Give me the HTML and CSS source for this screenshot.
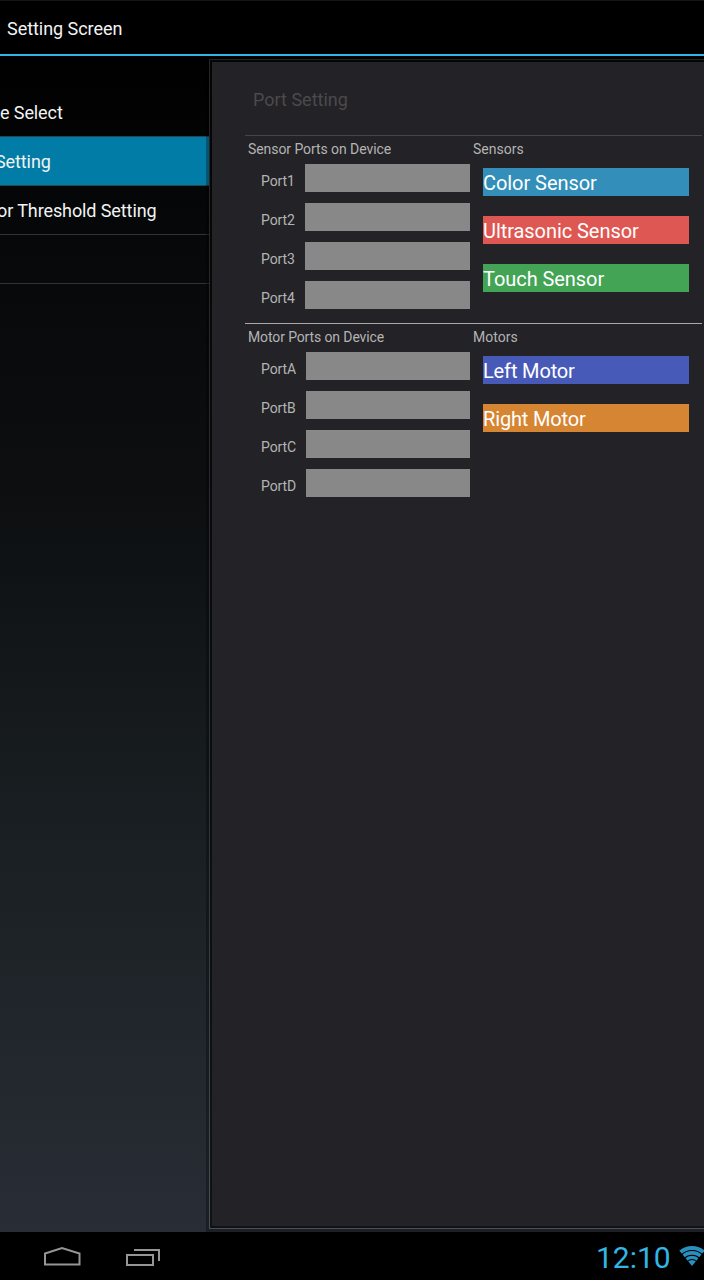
FILE: index.html
```
<!DOCTYPE html>
<html lang="en">
<head>
<meta charset="utf-8">
<title>Setting Screen</title>
<link rel="stylesheet" href="styles.css">
</head>
<body>
<div class="screen">
  <header class="action-bar"><h1>Setting Screen</h1></header>
  <div class="body">
    <nav class="sidebar">
      <div class="item"><span>e Select</span></div>
      <div class="item selected"><span class="cut-s">Setting</span></div>
      <div class="item"><span class="cut-o">or Threshold Setting</span></div>
      <div class="item"></div>
    </nav>
    <main class="frame">
      <div class="inner">
        <div class="panel">
          <h2>Port Setting</h2>
          <section class="group first">
            <div class="ports">
              <h3>Sensor Ports on Device</h3>
              <div class="port"><label>Port1</label><div class="slot"></div></div>
              <div class="port"><label>Port2</label><div class="slot"></div></div>
              <div class="port"><label>Port3</label><div class="slot"></div></div>
              <div class="port"><label>Port4</label><div class="slot"></div></div>
            </div>
            <div class="parts">
              <h3>Sensors</h3>
              <div class="chip blue"><span>Color Sensor</span></div>
              <div class="chip red"><span>Ultrasonic Sensor</span></div>
              <div class="chip green"><span>Touch Sensor</span></div>
            </div>
          </section>
          <section class="group second">
            <div class="ports">
              <h3>Motor Ports on Device</h3>
              <div class="port"><label>PortA</label><div class="slot"></div></div>
              <div class="port"><label>PortB</label><div class="slot"></div></div>
              <div class="port"><label>PortC</label><div class="slot"></div></div>
              <div class="port"><label>PortD</label><div class="slot"></div></div>
            </div>
            <div class="parts">
              <h3>Motors</h3>
              <div class="chip indigo"><span>Left Motor</span></div>
              <div class="chip orange"><span>Right Motor</span></div>
            </div>
          </section>
        </div>
      </div>
    </main>
  </div>
  <footer class="system-bar">
    <svg class="home" width="38" height="20" viewBox="0 0 38 20" fill="none" stroke="#969696" stroke-width="2"><path d="M2 18.500V7.500L19 2L36.500 7.500V18.500Z"/></svg>
    <svg class="recent" width="36" height="19" viewBox="0 0 36 19" fill="none" stroke="#969696" stroke-width="2"><path d="M1 7H27V17H1ZM8 2H33V13"/></svg>
    <span class="clock">12:10</span>
    <svg class="wifi" width="26" height="20" viewBox="0 0 26 20">
      <clipPath id="fan"><path d="M13 20L-1 3V-2H27V3Z"/></clipPath>
      <g clip-path="url(#fan)" fill="none" stroke="#2a8fbd">
        <circle cx="13" cy="20" r="18" stroke-width="3.800"/>
        <circle cx="13" cy="20" r="13.100" stroke-width="3.600"/>
        <circle cx="13" cy="20" r="8.600" stroke-width="3.200"/>
        <circle cx="13" cy="20" r="3" stroke-width="6"/>
      </g>
    </svg>
  </footer>
</div>
</body>
</html>
```
FILE: styles.css
```
* { box-sizing: border-box; }
body { margin: 0; background: #000; font-family: Roboto, sans-serif; color: #f3f3f3; }
h1, h2, h3 { margin: 0; font-weight: 400; }
.screen { width: 704px; height: 1280px; overflow: hidden; display: flex; flex-direction: column; }
.action-bar { height: 56px; flex: none; padding-left: 7px; border-top: 1px solid #151515; border-bottom: 2px solid #33b5e5; }
.action-bar h1 { font-size: 18px; line-height: 55px; letter-spacing: -0.05px; }
.body { height: 1176px; flex: none; display: flex; background: linear-gradient(#000 0%, #07080a 16%, #0c0e10 36%, #171c1f 60%, #20262b 82%, #292d36 100%); }
.sidebar { width: 206px; flex: none; padding-top: 32px; }
.item { width: 209px; height: 49px; border-bottom: 1px solid #303234; font-size: 18px; line-height: 49px; letter-spacing: -0.1px; white-space: nowrap; overflow: hidden; }
.item:first-child { border-bottom-color: #244650; }
.item.selected { background: #007ca6; border-bottom-color: #244650; }
.item span { display: block; }
.item .cut-s { margin-left: -5px; }
.item .cut-o { margin-left: -3px; }
.frame { flex: 1; padding: 3px 0 3px 3px; background: rgba(0, 0, 0, .3); z-index: 1; }
.inner { height: 1170px; padding: 2px 0 2px 2px; border: 1px solid #3a4042; border-image: linear-gradient(#242424, #2c2f30 60%, #4a5052) 1; border-width: 1px 0 1px 1px; background: linear-gradient(#050505, #101214); }
.panel { width: 492px; height: 1164px; padding: 24px 2px 0 33px; background: #232226; }
h2 { height: 49px; padding-left: 8px; font-size: 18px; line-height: 28px; color: #4b4a4c; }
.group { width: 457px; display: flex; border-top: 1px solid #454448; }
.first { height: 188px; }
.second { border-top-color: #a9a9aa; }
.ports { width: 225px; }
h3 { height: 28px; font-size: 14px; line-height: 27px; letter-spacing: -.07px; color: #b4b4b4; white-space: nowrap; }
.ports h3 { padding-left: 3px; }
.second .ports h3 { letter-spacing: -.12px; }
.port { display: flex; height: 28px; margin-bottom: 11px; }
.port label { width: 60px; flex: none; padding-left: 16px; font-size: 14px; line-height: 35px; letter-spacing: -.1px; color: #b4b4b4; }
.second .port label { width: 61px; }
.slot { flex: 1; background: #888; }
.parts { padding-left: 3px; }
.parts .chip { margin-left: 10px; margin-bottom: 20px; }
.parts h3 { height: 32px; letter-spacing: 0; }
.chip { width: 206px; height: 28px; font-size: 20px; line-height: 30px; letter-spacing: -.06px; color: #fff; white-space: nowrap; }
.indigo, .orange { letter-spacing: -.15px; }
.blue { background: #338fb9; }
.red { background: #df5752; }
.green { background: #43a456; }
.indigo { background: #475ab8; }
.orange { background: #d68533; }
.system-bar { height: 48px; flex: none; background: #000; display: flex; align-items: flex-start; }
.home { margin: 14px 0 0 43px; flex: none; }
.recent { margin: 16px 0 0 45px; flex: none; }
.clock { width: 83px; flex: none; margin-left: 434px; font-size: 30px; line-height: 51px; color: #33b5e5; }
.wifi { flex: none; margin-top: 14px; }
```
